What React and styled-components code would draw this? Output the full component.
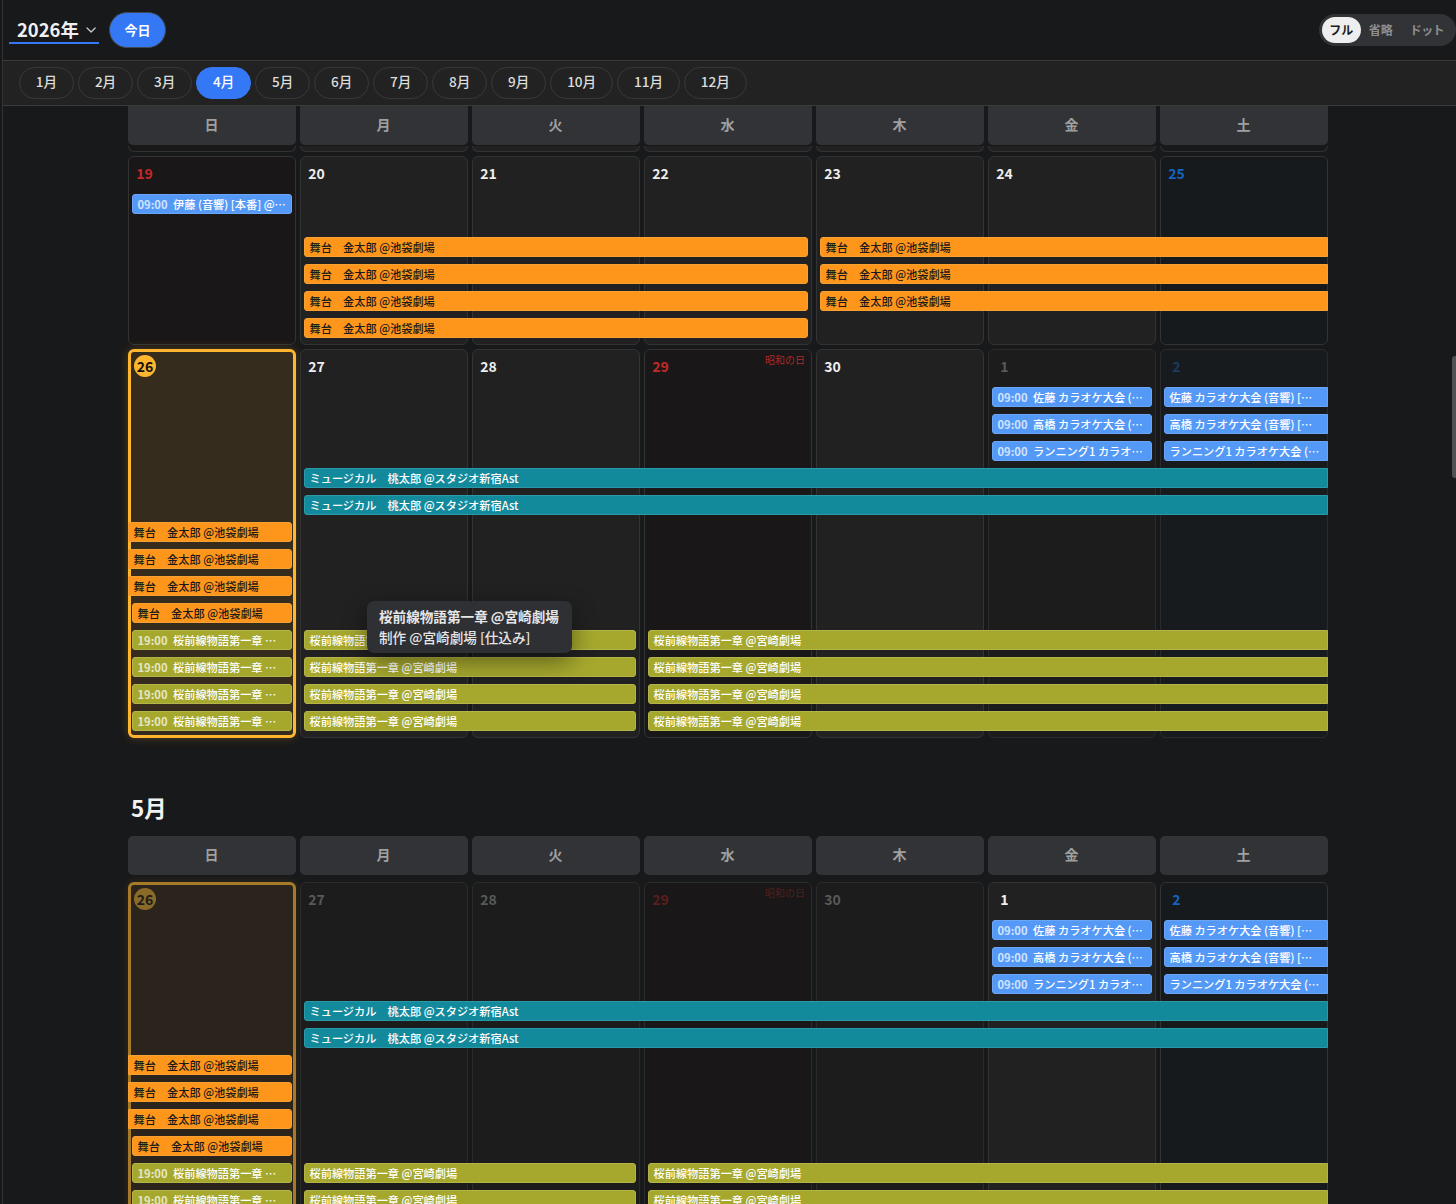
import React from 'react';
import styled, { createGlobalStyle, css } from 'styled-components';
import { ChevronDown } from 'lucide-react';

const Global = createGlobalStyle`
  html, body { margin: 0; padding: 0; background: #18191b; }
  body { font-family: "Noto Sans CJK JP", "Noto Sans", sans-serif; color: #eee; }
  * { box-sizing: border-box; }
`;

const Page = styled.div`
  position: relative;
  height: 1204px;
  overflow: hidden;
  margin-left: 2px;
  border-left: 1px solid #333;
  display: flex;
  flex-direction: column;
  background: #18191b;
`;
const TopBar = styled.header`
  height: 61px;
  flex: none;
  display: flex;
  align-items: center;
  border-bottom: 1px solid #3a3a3a;
  padding: 0 0 1px 6px;
`;
const YearSelect = styled.div`
  width: 90px;
  height: 27px;
  margin-top: 2px;
  padding-left: 8px;
  display: flex;
  align-items: center;
  gap: 4px;
  font-size: 18.4px;
  font-weight: 700;
  line-height: 25px;
  white-space: nowrap;
  color: #f0f0f0;
  border-bottom: 2px solid #3478f6;
`;
const TodayButton = styled.button`
  margin-left: 10px;
  width: 57px;
  height: 36px;
  border-radius: 18px;
  border: 1px solid #44484f;
  background: #3478f6;
  color: #fff;
  font: 700 13px "Noto Sans CJK JP", sans-serif;
`;
const ModeToggle = styled.div`
  margin-left: auto;
  height: 32px;
  padding: 3px 4px 3px 3px;
  display: flex;
  align-items: center;
  border-radius: 16px;
  background: #323336;
`;
const ModeItem = styled.span`
  font-size: 12px;
  font-weight: 700;
  height: 26px;
  line-height: 25px;
  border-radius: 13px;
  padding: 0 8px;
  white-space: nowrap;
  color: #8f8f8f;
  ${p => p.$active && css`
    background: #eeeeee;
    color: #1c1c1c;
    width: 39px;
    padding: 0;
    text-align: center;
  `}
  ${p => p.$last && css`
    margin-left: 1px;
    letter-spacing: -0.6px;
  `}
`;
const MonthBar = styled.nav`
  height: 45px;
  flex: none;
  display: flex;
  align-items: center;
  gap: 4px;
  padding: 0 0 1px 16px;
  background: #222222;
  border-bottom: 1px solid #3a3a3a;
`;
const MonthPill = styled.span`
  height: 32px;
  padding: 0 15.85px;
  border-radius: 16px;
  border: 1px solid ${p => (p.$active ? '#3478f6' : '#383838')};
  background: ${p => (p.$active ? '#3478f6' : 'transparent')};
  color: ${p => (p.$active ? '#fff' : '#dcdcdc')};
  font-size: 13.6px;
  font-weight: 500;
  line-height: 27px;
`;
const Scroller = styled.main`
  flex: 1;
  overflow: hidden;
  padding-right: 3px;
`;
const Content = styled.div`
  width: 1200px;
  margin: 0 auto;
`;
const HeadRow = styled.div`
  display: grid;
  grid-template-columns: repeat(7, 168px);
  column-gap: 4px;
  margin-bottom: ${p => p.$gap}px;
`;
const HeadCell = styled.div`
  height: 39px;
  line-height: 37px;
  padding-right: 1px;
  text-align: center;
  background: #323336;
  border-radius: ${p => (p.$flush ? '0 0 5px 5px' : '5px')};
  color: #a0a0a0;
  font-size: 14px;
  font-weight: 700;
`;
const Sliver = styled.div`
  display: grid;
  grid-template-columns: repeat(7, 168px);
  column-gap: 4px;
  margin-bottom: 4px;
`;
const SliverCell = styled.div`
  height: 6px;
  background: ${p => p.$bg};
  border: 1px solid #333;
  border-top: 0;
  border-radius: 0 0 6px 6px;
`;
const Week = styled.div`
  display: grid;
  grid-template-columns: repeat(7, 168px);
  grid-template-rows: ${p => p.$rows};
  column-gap: 4px;
  margin-bottom: 4px;
`;
const Cell = styled.div`
  grid-row: 1 / -1;
  grid-column: ${p => p.$col};
  position: relative;
  padding: 5px 5px 5px 4.5px;
  border-radius: 6px;
  border: 1px solid ${p => (p.$dim ? '#2b2b2b' : '#333')};
  background: ${p => p.$bg};
  ${p => p.$today && css`
    padding: 3px;
    border: 3px solid ${p.$dim ? '#a67a28' : '#ffb52e'};
    background: ${p.$dim ? '#2a241c' : '#352c1e'};
    box-shadow: 0 0 10px ${p.$dim ? 'rgba(255,181,46,.12)' : 'rgba(255,181,46,.25)'};
  `}
`;
const DateNum = styled.span`
  display: block;
  width: 22px;
  height: 22px;
  line-height: 22px;
  text-align: center;
  font-size: 14px;
  font-weight: 700;
  color: ${p => p.$color};
  ${p => p.$today && css`
    border-radius: 50%;
    background: ${p.$dim ? '#8a6a28' : '#ffb52e'};
    color: ${p.$dim ? '#1c1c1c' : '#111'};
  `}
`;
const Holiday = styled.span`
  position: absolute;
  top: 3px;
  right: 6px;
  font-size: 10px;
  line-height: 14px;
  color: ${p => (p.$dim ? '#4f2020' : '#a82a2a')};
`;
const Bar = styled.div`
  grid-column: ${p => p.$from} / ${p => p.$to};
  grid-row: ${p => p.$lane};
  z-index: 1;
  height: 20px;
  margin-left: ${p => (p.$contL ? 0 : 4)}px;
  margin-right: ${p => (p.$contR ? 0 : 4)}px;
  padding: 0 ${p => (p.$contR ? 5 : 4)}px 0 4.5px;
  border: 1px solid ${p => p.$border};
  border-radius: ${p => (p.$contL ? 0 : 3)}px ${p => (p.$contR ? 0 : 3)}px ${p => (p.$contR ? 0 : 3)}px ${p => (p.$contL ? 0 : 3)}px;
  background: ${p => p.$bg};
  color: ${p => p.$fg};
  font-size: 11.2px;
  font-weight: 500;
  line-height: 18px;
  white-space: nowrap;
  overflow: hidden;
  text-overflow: ellipsis;
`;
const Time = styled.span`
  font-weight: 700;
  opacity: .72;
  margin-right: 5.5px;
`;
const MonthTitle = styled.h2`
  margin: 53px 0 13px;
  padding-left: 3px;
  font-size: 22.4px;
  line-height: 32px;
  font-weight: 700;
  color: #f2f2f2;
`;
const Tooltip = styled.div`
  position: absolute;
  left: 364px;
  top: 601px;
  width: 205px;
  height: 52px;
  padding: 5px 12px;
  z-index: 5;
  border-radius: 7px;
  background: #2f3033;
  box-shadow: 0 8px 24px rgba(0,0,0,.45);
  color: #e6e6e6;
  font-size: 13.6px;
  font-weight: 500;
  line-height: 21px;
  white-space: nowrap;
`;
const TipTitle = styled.div`
  font-weight: 700;
`;
const ScrollThumb = styled.div`
  position: absolute;
  right: 0;
  top: 356px;
  width: 4px;
  height: 122px;
  border-radius: 3px 0 0 3px;
  background: #505154;
`;

const WEEK = ['日', '月', '火', '水', '木', '金', '土'];
const MONTHS = ['1月','2月','3月','4月','5月','6月','7月','8月','9月','10月','11月','12月'];
const LANES = '38px repeat(13, 27px)';
const LANES_A = '38px 27px 16px repeat(4, 27px)';

const KIND = {
  blue: { $bg: '#5599f7', $fg: '#fff', $border: '#6aa6f8' },
  orange: { $bg: '#ff961c', $fg: '#1a1a1a', $border: '#f7a033' },
  teal: { $bg: '#138a9c', $fg: '#fff', $border: '#2a9aa8' },
  olive: { $bg: '#a6a82e', $fg: '#fff', $border: '#b4b548' },
};
const STAGE = '舞台　金太郎 @池袋劇場';
const MUSICAL = 'ミュージカル　桃太郎 @スタジオ新宿Ast';
const SAKURA = '桜前線物語第一章 @宮崎劇場';
const karaoke = n => `${n} カラオケ大会 (音響) [本番] @宮崎劇場`;

const colors = {
  sun: '#c62828', sat: '#1565c0', norm: '#eeeeee',
  dimNorm: '#595959', dimSun: '#5a1f1f', dimSat: '#1c3a60',
};
const cellBg = (col, dim, holiday) => {
  if (col === 1 || holiday) return dim ? '#191718' : '#1a1718';
  if (col === 7) return dim ? '#181b1e' : '#161a1d';
  return dim ? '#1c1c1c' : '#212121';
};
const dateColor = (col, dim, holiday) => {
  if (col === 1 || holiday) return dim ? colors.dimSun : colors.sun;
  if (col === 7) return dim ? colors.dimSat : colors.sat;
  return dim ? colors.dimNorm : colors.norm;
};

const weekA = {
  rows: LANES_A,
  days: [19, 20, 21, 22, 23, 24, 25].map(n => ({ n })),
  bars: [
    { kind: 'blue', from: 1, to: 2, lane: 2, time: '09:00', text: '伊藤 (音響) [本番] @宮崎劇場' },
    ...[4, 5, 6, 7].map(lane => ({ kind: 'orange', from: 2, to: 5, lane, text: STAGE })),
    ...[4, 5, 6].map(lane => ({ kind: 'orange', from: 5, to: 8, lane, text: STAGE, contR: true })),
  ],
};

const sharedBars = [
  ...['佐藤', '高橋', 'ランニング1'].map((name, i) => ({ kind: 'blue', from: 6, to: 7, lane: i + 2, time: '09:00', text: karaoke(name) })),
  ...['佐藤', '高橋', 'ランニング1'].map((name, i) => ({ kind: 'blue', from: 7, to: 8, lane: i + 2, text: karaoke(name), contR: true })),
  ...[5, 6].map(lane => ({ kind: 'teal', from: 2, to: 8, lane, text: MUSICAL, contR: true })),
  ...[7, 8, 9].map(lane => ({ kind: 'orange', from: 1, to: 2, lane, text: STAGE, contL: true })),
  { kind: 'orange', from: 1, to: 2, lane: 10, text: STAGE },
  ...[11, 12, 13, 14].flatMap(lane => [
    { kind: 'olive', from: 1, to: 2, lane, time: '19:00', text: SAKURA },
    { kind: 'olive', from: 2, to: 4, lane, text: SAKURA },
    { kind: 'olive', from: 4, to: 8, lane, text: SAKURA, contR: true },
  ]),
];

const weekDays = dimApril => [
  { n: 26, today: true, dim: dimApril },
  { n: 27, dim: dimApril },
  { n: 28, dim: dimApril },
  { n: 29, dim: dimApril, holiday: '昭和の日' },
  { n: 30, dim: dimApril },
  { n: 1, dim: !dimApril },
  { n: 2, dim: !dimApril },
];

function WeekRow({ rows, days, bars }) {
  return (
    <Week $rows={rows}>
      {days.map((d, i) => {
        const col = i + 1;
        return (
          <Cell key={col} $col={col} $today={d.today} $dim={d.dim} $bg={cellBg(col, d.dim, d.holiday)}>
            <DateNum $today={d.today} $dim={d.dim} $color={dateColor(col, d.dim, d.holiday)}>{d.n}</DateNum>
            {d.holiday && <Holiday $dim={d.dim}>{d.holiday}</Holiday>}
          </Cell>
        );
      })}
      {bars.map((b, i) => (
        <Bar key={i} {...KIND[b.kind]} $from={b.from} $to={b.to} $lane={b.lane} $contL={b.contL} $contR={b.contR}>
          {b.time && <Time>{b.time}</Time>}
          {b.text}
        </Bar>
      ))}
    </Week>
  );
}

function Head({ gap, flush }) {
  return (
    <HeadRow $gap={gap}>
      {WEEK.map(w => <HeadCell key={w} $flush={flush}>{w}</HeadCell>)}
    </HeadRow>
  );
}

export default function App() {
  return (
    <>
      <Global />
      <Page>
        <TopBar>
          <YearSelect>2026年<ChevronDown size={18} color="#cfcfcf" strokeWidth={1.8} /></YearSelect>
          <TodayButton>今日</TodayButton>
          <ModeToggle>
            <ModeItem $active>フル</ModeItem>
            <ModeItem>省略</ModeItem>
            <ModeItem $last>ドット</ModeItem>
          </ModeToggle>
        </TopBar>
        <MonthBar>
          {MONTHS.map(m => <MonthPill key={m} $active={m === '4月'}>{m}</MonthPill>)}
        </MonthBar>
        <Scroller>
          <Content>
            <Head gap={1} flush />
            <Sliver>
              {WEEK.map((w, i) => <SliverCell key={w} $bg={cellBg(i + 1, false)} />)}
            </Sliver>
            <WeekRow {...weekA} />
            <WeekRow rows={LANES} days={weekDays(false)} bars={sharedBars} />
            <MonthTitle>5月</MonthTitle>
            <Head gap={7} />
            <WeekRow rows={LANES} days={weekDays(true)} bars={sharedBars} />
          </Content>
        </Scroller>
        <Tooltip>
          <TipTitle>桜前線物語第一章 @宮崎劇場</TipTitle>
          <div>制作 @宮崎劇場 [仕込み]</div>
        </Tooltip>
        <ScrollThumb />
      </Page>
    </>
  );
}
